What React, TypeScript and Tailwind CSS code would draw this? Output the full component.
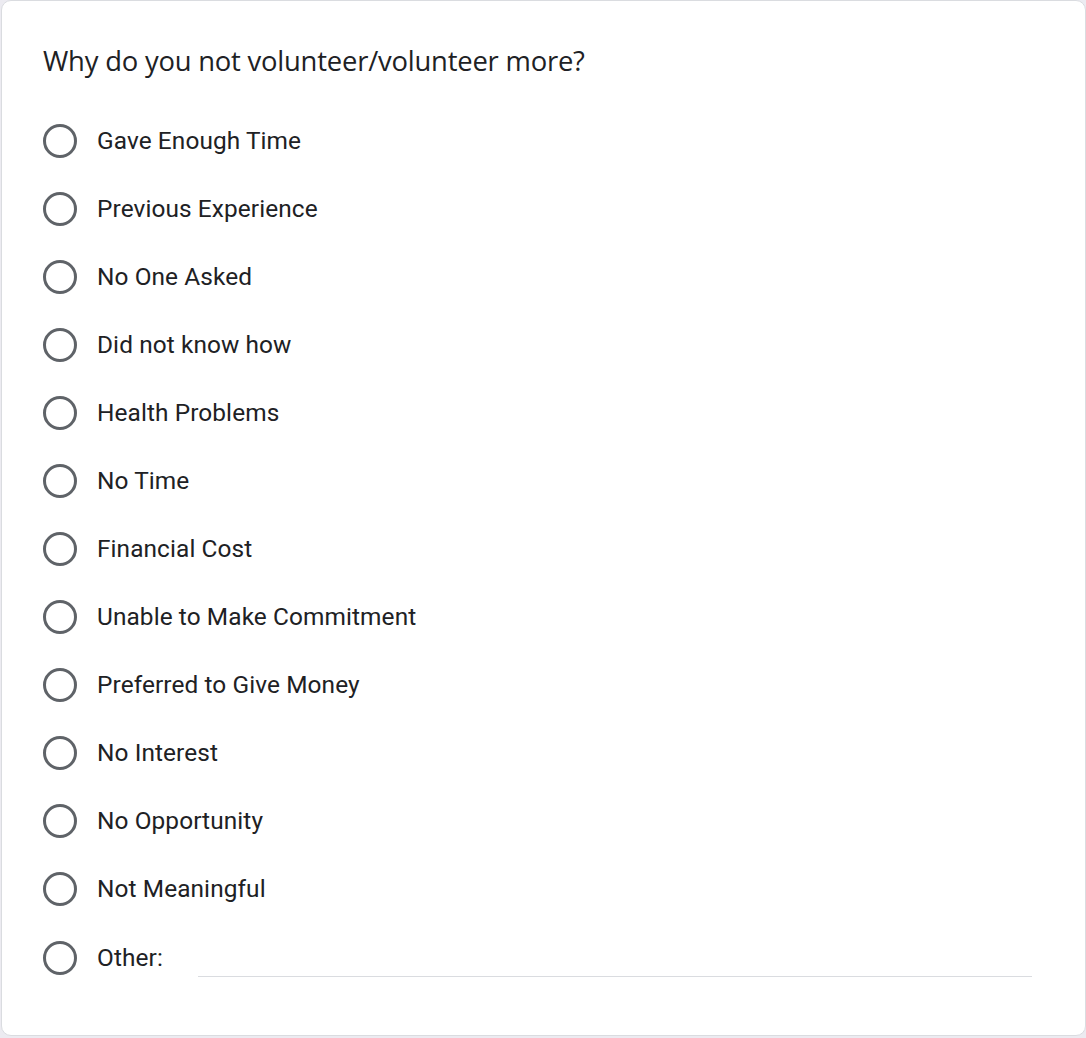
import React from 'react';

const options = [
  'Gave Enough Time',
  'Previous Experience',
  'No One Asked',
  'Did not know how',
  'Health Problems',
  'No Time',
  'Financial Cost',
  'Unable to Make Commitment',
  'Preferred to Give Money',
  'No Interest',
  'No Opportunity',
  'Not Meaningful',
];

const Radio: React.FC = () => (
  <div className="w-[34px] h-[34px] shrink-0 rounded-full border-[3px] border-[#5f6368]" />
);

const App: React.FC = () => {
  return (
    <div className="min-h-screen bg-[#ecebf1] pl-[1px]">
      <div className="w-[1085px] h-[1036px] bg-white rounded-[10px] border border-[#dadce0] pl-[41px] pr-[53px] pt-[42px] font-['Roboto',sans-serif] text-[#202124]">
        <h2 className="text-[27.4px] leading-[36px] font-['Open_Sans',sans-serif] tracking-[-0.2px]">
          Why do you not volunteer/volunteer more?
        </h2>
        <ul className="mt-[28px]">
          {options.map((o) => (
            <li key={o} className="h-[68px] flex items-center gap-[20px]">
              <Radio />
              <span className="text-[24.4px] leading-none tracking-[0.1px]">{o}</span>
            </li>
          ))}
          <li className="h-[70px] flex items-center gap-[20px]">
            <Radio />
            <span className="text-[24.4px] leading-none tracking-[0.1px]">Other:</span>
            <div className="flex-1 ml-[15px] self-stretch flex items-end pb-[16px]">
              <div className="w-full border-b border-[#dadce0]" />
            </div>
          </li>
        </ul>
      </div>
    </div>
  );
};

export default App;
